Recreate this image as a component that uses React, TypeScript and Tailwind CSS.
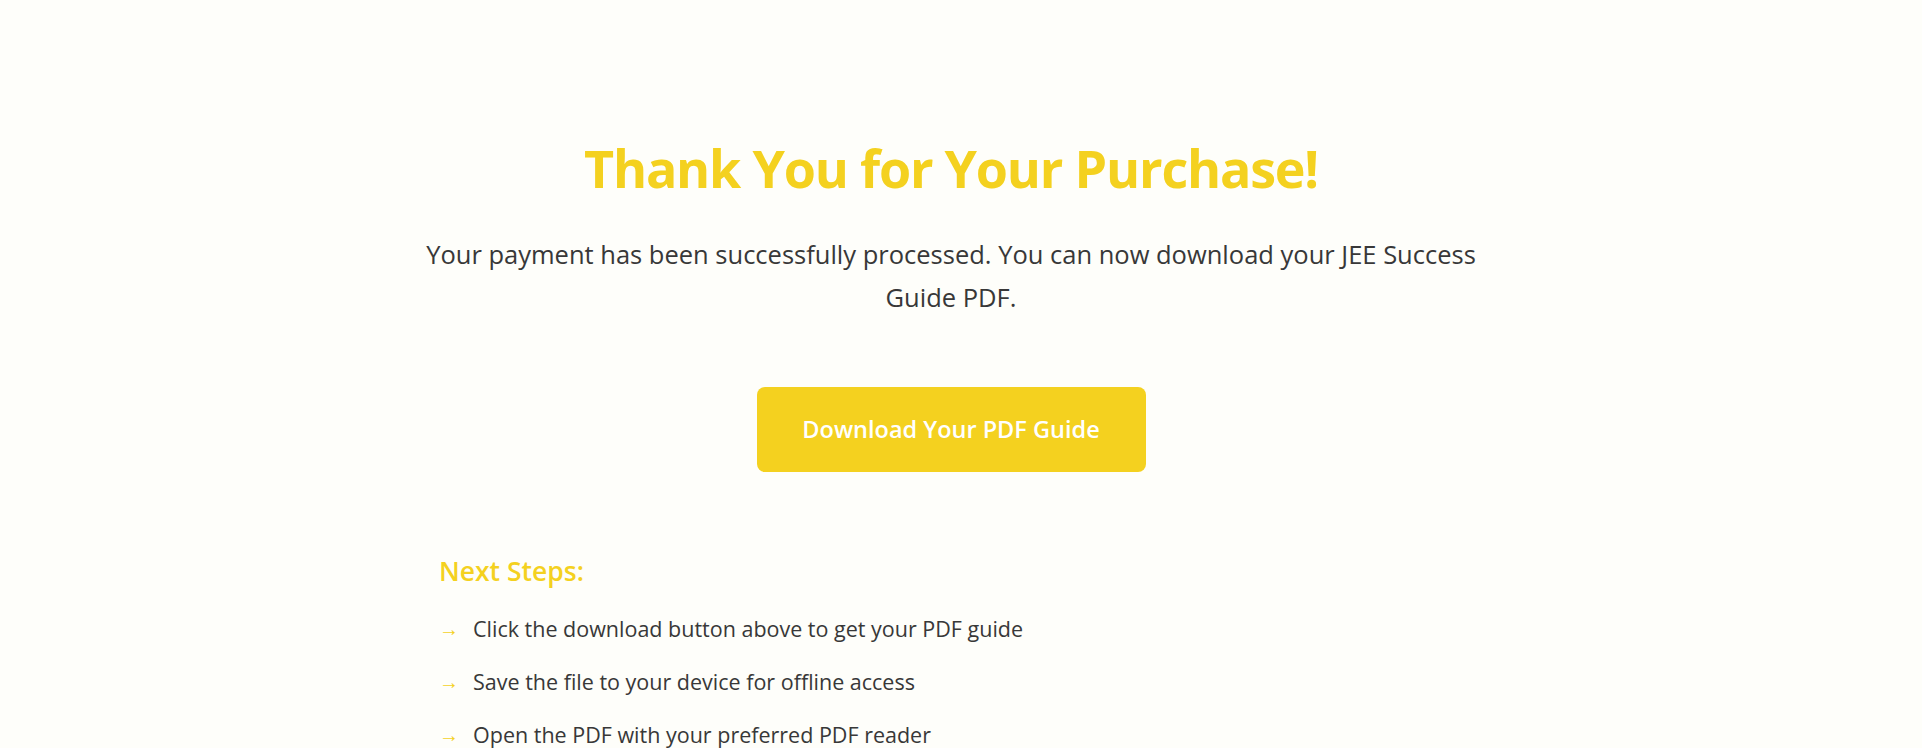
import React from "react";

const steps = [
  "Click the download button above to get your PDF guide",
  "Save the file to your device for offline access",
  "Open the PDF with your preferred PDF reader",
  "Start your JEE preparation journey with our proven strategies",
];

export default function App() {
  return (
    <div
      className="min-h-screen bg-[#fefefa] pr-[20px] text-[#333333]"
      style={{ fontFamily: '"Open Sans", "Noto Sans", sans-serif' }}
    >
      <main className="mx-auto flex max-w-6xl flex-col items-center px-4 pt-[137px] pb-24 text-center">
        {/* Heading */}
        <h1 className="text-[52px] font-bold leading-[62px] tracking-[-1.2px] text-[#f4d11f]">
          Thank You for Your Purchase!
        </h1>

        <p className="mt-[34px] text-[25.5px] leading-[43px] text-[#383838]">
          Your payment has been successfully processed. You can now download your JEE Success
          <br />
          Guide PDF.
        </p>

        {/* Download button */}
        <a
          href="#"
          className="mt-[68px] flex h-[85px] w-[389px] items-center justify-center rounded-lg bg-[#f4d11f] text-[23.5px] font-semibold text-white"
        >
          Download Your PDF Guide
        </a>

        {/* Next steps */}
        <section className="mt-[83px] w-full max-w-5xl text-left">
          <h2 className="text-[26.5px] font-semibold leading-tight text-[#f4d11f]">Next Steps:</h2>
          <ul className="mt-[24px] flex flex-col gap-[20px]">
            {steps.map((s) => (
              <li key={s} className="flex items-center gap-[14px] text-[21.5px] leading-[33px] text-[#383838]">
                <span className="w-[20px] text-[20px] text-[#f4d11f]">→</span>
                <span>{s}</span>
              </li>
            ))}
          </ul>
        </section>
      </main>
    </div>
  );
}
